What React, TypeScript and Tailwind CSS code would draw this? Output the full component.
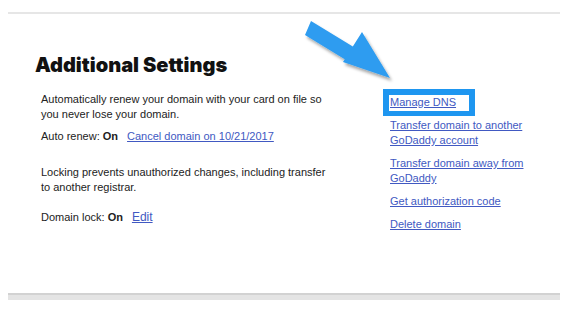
import React from "react";

const links = [
  "Transfer domain to another GoDaddy account",
  "Transfer domain away from GoDaddy",
  "Get authorization code",
  "Delete domain",
];

function Arrow() {
  return (
    <svg
      className="absolute left-[296px] top-[14px] pointer-events-none"
      width={104}
      height={72}
      viewBox="296 14 104 72"
    >
      <defs>
        <filter id="sh" x="-20%" y="-20%" width="140%" height="140%">
          <feDropShadow dx="2" dy="3" stdDeviation="1.6" floodColor="#000" floodOpacity="0.35" />
        </filter>
      </defs>
      <polygon
        points="311,21 352.8,46.5 362,32 390,78 343,62 344.7,59.2 305,35"
        fill="#2e9cf0"
        filter="url(#sh)"
      />
    </svg>
  );
}

export default function App() {
  return (
    <div className="relative w-[568px] h-[318px] bg-white overflow-hidden flex flex-col font-['Liberation_Sans',Arial,sans-serif] text-[#222]">
      <div className="mt-[12px] mx-[8px] h-[2px] bg-[#e6e6e6]" />

      <h1 className="mt-[39px] ml-[35px] text-[20px] leading-[24px] font-black tracking-[0px] text-[#111] font-['Inter',sans-serif]">
        Additional Settings
      </h1>

      <div className="flex mt-[14px]">
        <div className="ml-[41px] w-[292px] text-[11px] leading-[15px] pt-[1px]">
          <p>Automatically renew your domain with your card on file so you never lose your domain.</p>
          <p className="mt-[7px]">
            Auto renew: <span className="font-bold">On</span>
            <a href="#" className="ml-[9px] underline text-[#4159c2]">
              Cancel domain on 10/21/2017
            </a>
          </p>
          <p className="mt-[21px]">
            Locking prevents unauthorized changes, including transfer to another registrar.
          </p>
          <p className="mt-[15px]">
            Domain lock: <span className="font-bold">On</span>
            <a href="#" className="ml-[9px] underline text-[12px] text-[#4159c2]">
              Edit
            </a>
          </p>
        </div>

        <div className="ml-[50px] w-[147px] flex flex-col text-[11px] leading-[15px] text-[#4159c2]">
          <div className="w-[92px] border-[#1e96f0] border-t-[6px] border-l-[6px] border-r-[6px] border-b-[5px] pl-[1px] pb-[1px] -mt-[2px]">
            <a href="#" className="underline">Manage DNS</a>
          </div>
          <div className="mt-[2px] pl-[7px] flex flex-col gap-[8px]">
            {links.map((l) => (
              <a key={l} href="#" className="underline">
                {l}
              </a>
            ))}
          </div>
        </div>
      </div>

      <div className="mt-auto mb-[18px] mx-[8px] h-[7px] bg-[#e4e4e4] border-t-[2px] border-[#d2d2d2]" />

      <Arrow />
    </div>
  );
}
